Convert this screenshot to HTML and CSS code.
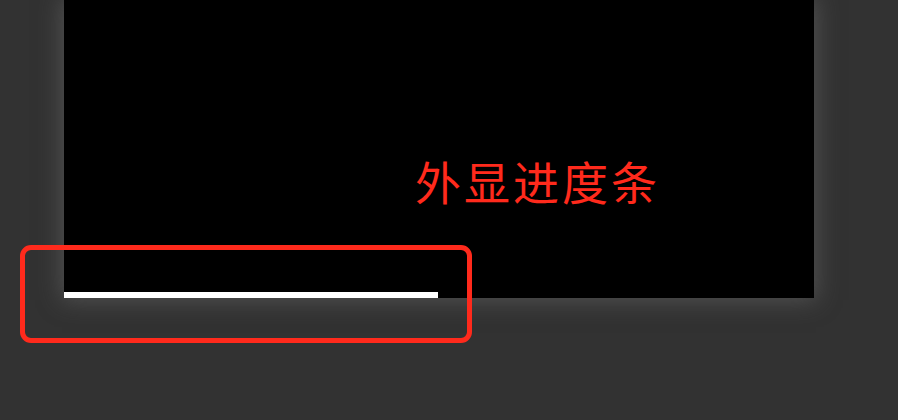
FILE: index.html
```html
<!DOCTYPE html>
<html lang="zh">
<head>
<meta charset="utf-8">
<link rel="stylesheet" href="styles.css">
</head>
<body>
<div class="stage">
  <div class="screen">
    <div class="caption">外显进度条</div>
    <div class="progress"><div class="progress-fill" style="width: 374px"></div></div>
  </div>
  <div class="highlight"></div>
</div>
</body>
</html>
```
FILE: styles.css
```css
html, body {
  margin: 0;
  padding: 0;
  background: #323232;
  width: 898px;
  height: 420px;
  overflow: hidden;
}
.stage {
  position: relative;
  width: 898px;
  height: 420px;
  padding-left: 64px;
  box-sizing: border-box;
}
.screen {
  width: 750px;
  height: 298px;
  background: #000;
  box-shadow: 0 0 22px 2px rgba(110, 110, 110, 0.55);
  display: flex;
  flex-direction: column;
  justify-content: flex-end;
  position: relative;
}
.caption {
  font-family: "Noto Sans CJK SC", sans-serif;
  font-size: 46px;
  line-height: 56px;
  color: #ff2a1c;
  margin-left: 351px;
  margin-bottom: 84px;
  letter-spacing: 3px;
}
.progress {
  height: 6px;
}
.progress-fill {
  height: 6px;
  background: #fff;
}
.highlight {
  position: absolute;
  left: 20px;
  top: 245px;
  width: 442px;
  height: 88px;
  border: 5px solid #ff2a1c;
  border-radius: 11px;
}
```
